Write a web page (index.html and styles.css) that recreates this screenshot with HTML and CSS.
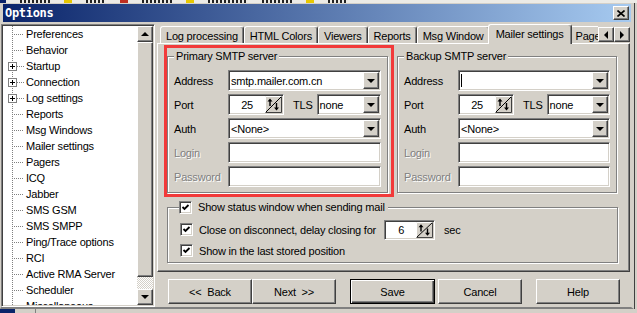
FILE: index.html
```html
<!DOCTYPE html>
<html lang="en">
<head>
    <meta charset="UTF-8">
    <title>Options</title>
    <link rel="stylesheet" href="styles.css">
</head>
<body>
    <!-- bits of the app window behind -->
    <div class="desk-top">
        <span class="d-blue"></span>
        <span class="d-txt w30"></span>
        <span class="d-ico"></span>
        <span class="d-txt w20"></span>
        <span class="d-ico red"></span>
        <span class="d-txt w30"></span>
        <span class="d-ico"></span>
        <span class="d-txt w40"></span>
        <span class="d-txt w30"></span>
        <span class="d-ico"></span>
        <span class="d-txt w20"></span>
    </div>

    <div class="window">
        <div class="titlebar">
            <span class="title">Options</span>
            <span class="close raised">
                <svg width="8" height="7" viewBox="0 0 8 7"><path d="M0.5 0.5L7.5 6.5M7.5 0.5L0.5 6.5" stroke="#000" stroke-width="1.6"/></svg>
            </span>
        </div>

        <div class="client">
            <div class="tree-frame sunken">
                <ul class="tree">
                    <li><span class="twig"></span>Preferences</li>
                    <li><span class="twig"></span>Behavior</li>
                    <li><span class="plus"></span><span class="twig short"></span>Startup</li>
                    <li><span class="plus"></span><span class="twig short"></span>Connection</li>
                    <li><span class="plus"></span><span class="twig short"></span>Log settings</li>
                    <li><span class="twig"></span>Reports</li>
                    <li><span class="twig"></span>Msg Windows</li>
                    <li><span class="twig"></span>Mailer settings</li>
                    <li><span class="twig"></span>Pagers</li>
                    <li><span class="twig"></span>ICQ</li>
                    <li><span class="twig"></span>Jabber</li>
                    <li><span class="twig"></span>SMS GSM</li>
                    <li><span class="twig"></span>SMS SMPP</li>
                    <li><span class="twig"></span>Ping/Trace options</li>
                    <li><span class="twig"></span>RCI</li>
                    <li><span class="twig"></span>Active RMA Server</li>
                    <li><span class="twig"></span>Scheduler</li>
                    <li><span class="twig"></span>Miscellaneous</li>
                </ul>
                <div class="vscroll">
                    <span class="sbtn raised up"></span>
                    <span class="thumb raised"></span>
                    <span class="track"></span>
                    <span class="sbtn raised down"></span>
                </div>
            </div>

            <div class="main">
                <div class="tabs">
                    <div class="tab-list">
                        <span class="tab">Log processing</span>
                        <span class="tab">HTML Colors</span>
                        <span class="tab">Viewers</span>
                        <span class="tab">Reports</span>
                        <span class="tab">Msg Window</span>
                        <span class="tab active">Mailer settings</span>
                        <span class="tab">Pagers</span>
                    </div>
                    <span class="tab-arrow raised left"></span>
                    <span class="tab-arrow raised right"></span>
                </div>

                <div class="panel">
                    <div class="servers">
                        <div class="highlight">
                            <div class="group smtp">
                                <div class="group-title">Primary SMTP server</div>
                                <div class="form">
                                    <label>Address</label>
                                    <div class="combo sunken"><span class="val">smtp.mailer.com.cn</span><span class="drop raised"></span></div>
                                    <label>Port</label>
                                    <div class="port-row">
                                        <div class="spin sunken">
                                            <span class="num">25</span>
                                            <svg class="updown" viewBox="0 0 17 17" preserveAspectRatio="none"><rect x="0" y="0" width="17" height="17" fill="#d4d0c8"/><path d="M0.5 16.5V0.5H16.5" stroke="#fff" fill="none"/><path d="M0.5 16.5H16.5V0.5" stroke="#404040" fill="none"/><path d="M1 16L16 1" stroke="#000"/><path d="M5 4v6M11.5 7v6" stroke="#000" stroke-width="1.4"/><path d="M2.5 5.5L5 2.5L7.5 5.5Z M9 11.5L11.5 14.5L14 11.5Z" fill="#000"/></svg>
                                        </div>
                                        <label class="tls">TLS</label>
                                        <div class="combo sunken"><span class="val">none</span><span class="drop raised"></span></div>
                                    </div>
                                    <label>Auth</label>
                                    <div class="combo sunken"><span class="val">&lt;None&gt;</span><span class="drop raised"></span></div>
                                    <label class="off">Login</label>
                                    <div class="edit sunken"></div>
                                    <label class="off">Password</label>
                                    <div class="edit sunken"></div>
                                </div>
                            </div>
                        </div>

                        <div class="group smtp backup">
                            <div class="group-title">Backup SMTP server</div>
                            <div class="form">
                                <label>Address</label>
                                <div class="combo sunken"><span class="caret"></span><span class="val"></span><span class="drop raised"></span></div>
                                <label>Port</label>
                                <div class="port-row">
                                    <div class="spin sunken">
                                        <span class="num">25</span>
                                        <svg class="updown" viewBox="0 0 17 17" preserveAspectRatio="none"><rect x="0" y="0" width="17" height="17" fill="#d4d0c8"/><path d="M0.5 16.5V0.5H16.5" stroke="#fff" fill="none"/><path d="M0.5 16.5H16.5V0.5" stroke="#404040" fill="none"/><path d="M1 16L16 1" stroke="#000"/><path d="M5 4v6M11.5 7v6" stroke="#000" stroke-width="1.4"/><path d="M2.5 5.5L5 2.5L7.5 5.5Z M9 11.5L11.5 14.5L14 11.5Z" fill="#000"/></svg>
                                    </div>
                                    <label class="tls">TLS</label>
                                    <div class="combo sunken"><span class="val">none</span><span class="drop raised"></span></div>
                                </div>
                                <label>Auth</label>
                                <div class="combo sunken"><span class="val">&lt;None&gt;</span><span class="drop raised"></span></div>
                                <label class="off">Login</label>
                                <div class="edit sunken"></div>
                                <label class="off">Password</label>
                                <div class="edit sunken"></div>
                            </div>
                        </div>
                    </div>

                    <div class="group status">
                        <div class="group-title check-row">
                            <span class="check sunken"><svg viewBox="0 0 9 9"><path d="M1.5 4L3.5 6L7.5 2" stroke="#000" stroke-width="1.8" fill="none"/></svg></span>
                            <span>Show status window when sending mail</span>
                        </div>
                        <div class="check-row line">
                            <span class="check sunken"><svg viewBox="0 0 9 9"><path d="M1.5 4L3.5 6L7.5 2" stroke="#000" stroke-width="1.8" fill="none"/></svg></span>
                            <span>Close on disconnect, delay closing for</span>
                            <div class="spin sunken small">
                                <span class="num">6</span>
                                <svg class="updown" viewBox="0 0 17 17" preserveAspectRatio="none"><rect x="0" y="0" width="17" height="17" fill="#d4d0c8"/><path d="M0.5 16.5V0.5H16.5" stroke="#fff" fill="none"/><path d="M0.5 16.5H16.5V0.5" stroke="#404040" fill="none"/><path d="M1 16L16 1" stroke="#000"/><path d="M5 4v6M11.5 7v6" stroke="#000" stroke-width="1.4"/><path d="M2.5 5.5L5 2.5L7.5 5.5Z M9 11.5L11.5 14.5L14 11.5Z" fill="#000"/></svg>
                            </div>
                            <span class="sec">sec</span>
                        </div>
                        <div class="check-row line">
                            <span class="check sunken"><svg viewBox="0 0 9 9"><path d="M1.5 4L3.5 6L7.5 2" stroke="#000" stroke-width="1.8" fill="none"/></svg></span>
                            <span>Show in the last stored position</span>
                        </div>
                    </div>
                </div>

                <div class="buttons">
                    <button class="raised">&lt;&lt;&nbsp; Back</button>
                    <button class="raised">Next&nbsp; &gt;&gt;</button>
                    <button class="raised default">Save</button>
                    <button class="raised">Cancel</button>
                    <button class="raised help">Help</button>
                </div>
            </div>
        </div>
    </div>

    <div class="desk-bottom">
        <span class="d-blue"></span>
        <span class="d-line"></span>
    </div>
</body>
</html>
```

FILE: styles.css
```css
/* Reset */
* {
    margin: 0;
    padding: 0;
    box-sizing: border-box;
}

body {
    width: 637px;
    height: 313px;
    overflow: hidden;
    background: #d4d0c8;
    font-family: "Liberation Sans", Arial, sans-serif;
    font-size: 11px;
    letter-spacing: -0.2px;
    color: #000;
}

/* classic 3d frames */
.raised {
    border: 1px solid;
    border-color: #fff #404040 #404040 #fff;
    box-shadow: inset -1px -1px #808080;
    background: #d4d0c8;
}

.sunken {
    border: 1px solid;
    border-color: #808080 #fff #fff #808080;
    box-shadow: inset 1px 1px #404040, inset -1px -1px #d4d0c8;
    padding: 1px;
    background: #fff;
}

/* background windows */
.desk-top {
    height: 3px;
    display: flex;
    background: #ecebe6;
}

.desk-top span {
    height: 3px;
    margin-right: 14px;
}

.d-blue {
    width: 6px;
    background: #0a246a;
}

.d-txt {
    background: repeating-linear-gradient(to right, #222 0 2px, transparent 2px 4px);
}

.w20 { width: 20px; }
.w30 { width: 30px; }
.w40 { width: 40px; }

.d-ico {
    width: 8px;
    background: #e8c800;
}

.d-ico.red {
    background: #c03020;
}

.desk-bottom {
    height: 4px;
    display: flex;
    background: #d4d0c8;
}

.desk-bottom .d-blue {
    width: 15px;
}

.desk-bottom .d-line {
    width: 1px;
    margin-left: 20px;
    background: #808080;
}

/* window */
.window {
    width: 634px;
    border-top: 1px solid #d4d0c8;
    border-left: 1px solid #d4d0c8;
    border-right: 3px solid #d4d0c8;
    border-bottom: 2px solid #808080;
    box-shadow: 1px 0 0 #404040;
    background: #d4d0c8;
}

.titlebar {
    height: 18px;
    margin: 0 0 2px 2px;
    display: flex;
    align-items: center;
    background: linear-gradient(to right, #0a246a, #a6caf0);
}

.title {
    flex: 1;
    padding-left: 2px;
    color: #fff;
    font-family: "DejaVu Sans Mono", monospace;
    font-weight: bold;
    font-size: 12px;
    letter-spacing: -0.3px;
}

.close {
    width: 16px;
    height: 14px;
    margin-right: 2px;
    display: flex;
    align-items: center;
    justify-content: center;
}

.client {
    display: flex;
    padding-right: 1px;
}

/* tree */
.tree-frame {
    width: 154px;
    height: 283px;
    display: flex;
}

.tree {
    flex: 1;
    list-style: none;
    overflow: hidden;
    background: linear-gradient(#808080 1px, transparent 1px) 9px 0 / 1px 2px repeat-y, #fff;
}

.tree li {
    height: 16px;
    display: flex;
    align-items: center;
    white-space: nowrap;
}

.twig {
    width: 12px;
    height: 1px;
    margin: 0 2px 0 9px;
    background: linear-gradient(to right, #808080 1px, transparent 1px) 0 0 / 2px 1px;
}

.twig.short {
    width: 7px;
    margin-left: 0;
}

.plus {
    width: 9px;
    height: 9px;
    margin-left: 5px;
    border: 1px solid #808080;
    background: linear-gradient(#000, #000) center / 5px 1px no-repeat,
                linear-gradient(#000, #000) center / 1px 5px no-repeat,
                #fff;
}

.vscroll {
    width: 16px;
    display: flex;
    flex-direction: column;
}

.sbtn {
    height: 16px;
    display: flex;
    align-items: center;
    justify-content: center;
}

.sbtn::after {
    content: "";
    border-left: 4px solid transparent;
    border-right: 4px solid transparent;
}

.sbtn.up::after {
    border-bottom: 4px solid #000;
}

.sbtn.down::after {
    border-top: 4px solid #000;
}

.thumb {
    flex: 1;
}

.track {
    height: 12px;
    background: repeating-conic-gradient(#fff 0 25%, #d4d0c8 0 50%) 0 0 / 2px 2px;
}

/* right side */
.main {
    width: 473px;
    margin-left: 2px;
}

.tabs {
    display: flex;
    height: 20px;
    margin-bottom: -1px;
}

.tab-list {
    flex: 1;
    min-width: 0;
    display: flex;
    align-items: flex-start;
    overflow: hidden;
    padding-left: 3px;
}

.tab {
    height: 17px;
    margin-top: 2px;
    padding: 1px 5px 0;
    display: flex;
    align-items: center;
    white-space: nowrap;
    border-top: 1px solid #fff;
    border-left: 1px solid #fff;
    border-right: 1px solid #404040;
    border-radius: 3px 3px 0 0;
    box-shadow: inset -1px 0 #808080;
    background: #d4d0c8;
}

.tab.active {
    position: relative;
    z-index: 1;
    height: 20px;
    margin: 0 -2px;
    padding: 0 7px 2px;
}

.tab-arrow {
    width: 16px;
    height: 15px;
    margin-top: 3px;
    display: flex;
    align-items: center;
    justify-content: center;
}

.tab-arrow::after {
    content: "";
    border-top: 4px solid transparent;
    border-bottom: 4px solid transparent;
}

.tab-arrow.left::after {
    border-right: 4px solid #000;
}

.tab-arrow.right::after {
    border-left: 4px solid #000;
}

.panel {
    height: 229px;
    padding: 1px;
    border: 1px solid;
    border-color: #fff #404040 #404040 #fff;
    box-shadow: inset -1px -1px #808080;
}

.servers {
    display: flex;
    align-items: flex-start;
    padding-left: 5px;
}

.highlight {
    width: 230px;
    height: 152px;
    padding-top: 8px;
    border: 3px solid #f23a3a;
}

/* group boxes */
.group {
    border: 1px solid #808080;
    box-shadow: inset 1px 1px #fff, 1px 1px #fff;
}

.group-title {
    display: table;
    margin: -7px 0 0 0;
    padding: 0 2px;
    line-height: 13px;
    background: #d4d0c8;
}

.smtp {
    width: 221px;
    height: 137px;
    padding: 0 6px 0 6px;
}

.backup {
    width: 220px;
    margin: 11px 0 0 3px;
}

.form {
    display: grid;
    grid-template-columns: 54px 1fr;
    grid-auto-rows: 21px;
    row-gap: 3px;
    margin-top: 7px;
}

.form label {
    display: flex;
    align-items: center;
}

.form label.off {
    color: #808080;
    text-shadow: 1px 1px #fff;
}

.combo {
    display: flex;
    align-items: center;
    height: 21px;
}

.combo .val {
    flex: 1;
    padding-left: 1px;
    white-space: nowrap;
    overflow: hidden;
}

.caret {
    width: 1px;
    height: 13px;
    margin-left: 1px;
    background: #000;
}

.drop {
    width: 16px;
    height: 17px;
    display: flex;
    align-items: center;
    justify-content: center;
}

.drop::after {
    content: "";
    border-left: 4px solid transparent;
    border-right: 4px solid transparent;
    border-top: 4px solid #000;
}

.edit {
    height: 21px;
}

.port-row {
    display: flex;
    align-items: center;
}

.port-row .combo {
    flex: 1;
    margin-left: 4px;
}

.tls {
    margin-left: 9px;
}

.spin {
    width: 56px;
    height: 21px;
    display: flex;
    align-items: center;
}

.spin .num {
    flex: 1;
    text-align: right;
    padding-right: 12px;
}

.updown {
    width: 17px;
    height: 17px;
}

.spin.small {
    width: 51px;
    height: 20px;
    margin: 0 9px 0 8px;
}

.spin.small .updown {
    height: 16px;
}

/* status options */
.status {
    width: 451px;
    height: 56px;
    margin: 10px 0 0 8px;
}

.check-row {
    display: flex;
    align-items: center;
}

.group-title.check-row {
    display: flex;
    width: max-content;
    margin: -7px 0 0 11px;
    padding: 0 3px 0 0;
}

.check-row.line {
    height: 21px;
    padding-left: 12px;
}

.check-row.line:nth-child(2) {
    margin-top: 5px;
}

.check {
    width: 13px;
    height: 13px;
    margin-right: 6px;
    display: flex;
}

.check svg {
    width: 9px;
    height: 9px;
}

/* dialog buttons */
.buttons {
    display: flex;
    margin-top: 7px;
    padding-left: 11px;
}

.buttons button {
    width: 84px;
    height: 25px;
    font: inherit;
    letter-spacing: inherit;
    color: #000;
}

.buttons .default {
    width: 85px;
    margin: 0 3px 0 14px;
    border: 1px solid #000;
    box-shadow: inset 1px 1px #fff, inset -1px -1px #404040, inset -2px -2px #808080;
}

.buttons .help {
    margin-left: 14px;
}
```
